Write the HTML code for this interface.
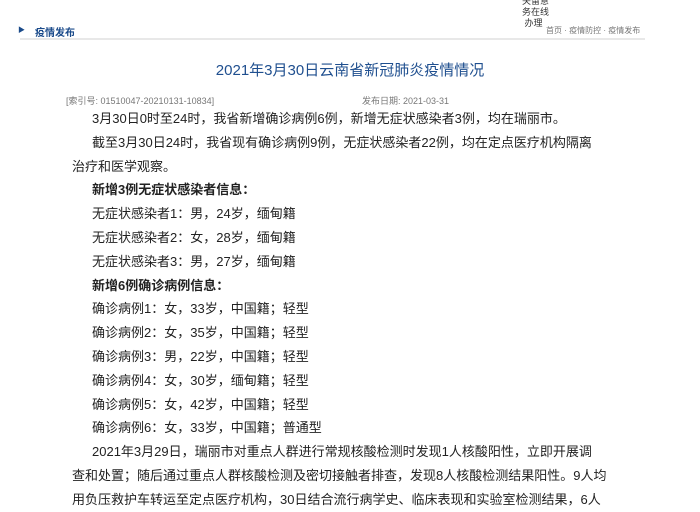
<!DOCTYPE html>
<html><head><meta charset="utf-8"><style>
body{margin:0;width:700px;height:500px;overflow:hidden;background:#fff;font-family:"Liberation Sans","Noto Sans CJK SC",sans-serif;position:relative}
.a{position:absolute;white-space:nowrap}
.p{position:absolute;left:72px;width:560px;font-size:13px;color:#222;line-height:23.8px;top:107px;white-space:nowrap}
.p div{text-indent:20px}
.p .b{font-weight:bold}
</style></head><body>
<div class="a" style="left:522px;top:-4px;font-size:9px;line-height:11px;color:#333">关留意<br>务在线<br>&nbsp;办理</div>
<div class="a" style="left:18px;top:25px;font-size:7px;color:#1a4a8a">▶</div>
<div class="a" style="left:35px;top:24px;font-size:10px;color:#1a4a8a;font-weight:bold">疫情发布</div>
<div class="a" style="left:546px;top:25px;font-size:8px;color:#777">首页 · 疫情防控 · 疫情发布</div>
<div class="a" style="left:20px;top:38px;width:625px;height:2px;background:#e8e8e8"></div>
<div class="a" style="left:0;width:700px;text-align:center;top:59px;font-size:15px;color:#1f4f8f">2021年3月30日云南省新冠肺炎疫情情况</div>
<div class="a" style="left:66px;top:94px;font-size:9px;color:#777">[索引号: 01510047-20210131-10834]</div>
<div class="a" style="left:362px;top:94px;font-size:9px;color:#777">发布日期: 2021-03-31</div>
<div class="p">
<div>3月30日0时至24时，我省新增确诊病例6例，新增无症状感染者3例，均在瑞丽市。</div>
<div>截至3月30日24时，我省现有确诊病例9例，无症状感染者22例，均在定点医疗机构隔离<br>治疗和医学观察。</div>
<div class="b">新增3例无症状感染者信息：</div>
<div>无症状感染者1：男，24岁，缅甸籍</div>
<div>无症状感染者2：女，28岁，缅甸籍</div>
<div>无症状感染者3：男，27岁，缅甸籍</div>
<div class="b">新增6例确诊病例信息：</div>
<div>确诊病例1：女，33岁，中国籍；轻型</div>
<div>确诊病例2：女，35岁，中国籍；轻型</div>
<div>确诊病例3：男，22岁，中国籍；轻型</div>
<div>确诊病例4：女，30岁，缅甸籍；轻型</div>
<div>确诊病例5：女，42岁，中国籍；轻型</div>
<div>确诊病例6：女，33岁，中国籍；普通型</div>
<div>2021年3月29日，瑞丽市对重点人群进行常规核酸检测时发现1人核酸阳性，立即开展调<br>查和处置；随后通过重点人群核酸检测及密切接触者排查，发现8人核酸检测结果阳性。9人均<br>用负压救护车转运至定点医疗机构，30日结合流行病学史、临床表现和实验室检测结果，6人</div>
</div>
</body></html>
